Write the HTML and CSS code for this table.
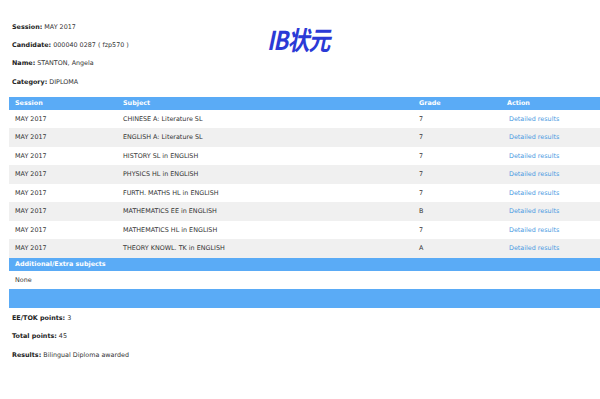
FILE: index.html
```html
<!DOCTYPE html>
<html>
<head>
<meta charset="utf-8">
<link rel="stylesheet" href="styles.css">
</head>
<body>
<div class="top">
  <div class="info">
    <div class="line"><b>Session:</b> MAY 2017</div>
    <div class="line"><b>Candidate:</b> 000040 0287 ( fzp570 )</div>
    <div class="line"><b>Name:</b> STANTON, Angela</div>
    <div class="line"><b>Category:</b> DIPLOMA</div>
  </div>
  <div class="logo">IB状元</div>
</div>
<div class="results">
  <div class="row head"><span>Session</span><span>Subject</span><span>Grade</span><span>Action</span></div>
  <div class="row"><span>MAY 2017</span><span>CHINESE A: Literature SL</span><span>7</span><a>Detailed results</a></div>
  <div class="row alt"><span>MAY 2017</span><span>ENGLISH A: Literature SL</span><span>7</span><a>Detailed results</a></div>
  <div class="row"><span>MAY 2017</span><span>HISTORY SL in ENGLISH</span><span>7</span><a>Detailed results</a></div>
  <div class="row alt"><span>MAY 2017</span><span>PHYSICS HL in ENGLISH</span><span>7</span><a>Detailed results</a></div>
  <div class="row"><span>MAY 2017</span><span>FURTH. MATHS HL in ENGLISH</span><span>7</span><a>Detailed results</a></div>
  <div class="row alt"><span>MAY 2017</span><span>MATHEMATICS EE in ENGLISH</span><span>B</span><a>Detailed results</a></div>
  <div class="row"><span>MAY 2017</span><span>MATHEMATICS HL in ENGLISH</span><span>7</span><a>Detailed results</a></div>
  <div class="row alt"><span>MAY 2017</span><span>THEORY KNOWL. TK in ENGLISH</span><span>A</span><a>Detailed results</a></div>
  <div class="sub-head">Additional/Extra subjects</div>
  <div class="none">None</div>
  <div class="bar"></div>
</div>
<div class="totals">
  <div class="line"><b>EE/TOK points:</b> 3</div>
  <div class="line"><b>Total points:</b> 45</div>
  <div class="line"><b>Results:</b> Bilingual Diploma awarded</div>
</div>
</body>
</html>
```
FILE: styles.css
```css
html, body {
  margin: 0;
  padding: 0;
  background: #ffffff;
}
body {
  font-family: "DejaVu Sans", Verdana, sans-serif;
  font-size: 6.4px;
  color: #333333;
  width: 600px;
  overflow: hidden;
}
b {
  font-weight: bold;
  color: #222222;
}
.top {
  display: flex;
  padding-top: 17.5px;
}
.info {
  width: 255px;
  padding-left: 12px;
}
.line {
  height: 18.4px;
  line-height: 18.4px;
  white-space: nowrap;
}
.logo {
  margin-top: 7px;
  font-family: "Noto Sans CJK SC", "Noto Sans", sans-serif;
  font-weight: bold;
  font-style: italic;
  font-size: 26px;
  line-height: 28px;
  height: 28px;
  color: #2b3ad6;
  letter-spacing: -1px;
  transform: scaleX(0.84);
  transform-origin: left center;
}
.results {
  margin-top: 5.5px;
  margin-left: 9px;
}
.row {
  display: grid;
  grid-template-columns: 108px 296px 88px 1fr;
  height: 18.5px;
  line-height: 18.5px;
  padding-left: 6px;
  white-space: nowrap;
}
.row.alt {
  background: #f0f0f0;
}
.row.head, .sub-head {
  background: #5aabf6;
  color: #ffffff;
  font-weight: bold;
  height: 13px;
  line-height: 13px;
}
.row a {
  color: #4a9ae2;
  padding-left: 2px;
}
.sub-head {
  padding-left: 6px;
}
.none {
  height: 18.5px;
  line-height: 18.5px;
  padding-left: 6px;
}
.bar {
  height: 19px;
  background: #5aabf6;
}
.totals {
  padding-left: 12px;
  margin-top: 1px;
}
```
